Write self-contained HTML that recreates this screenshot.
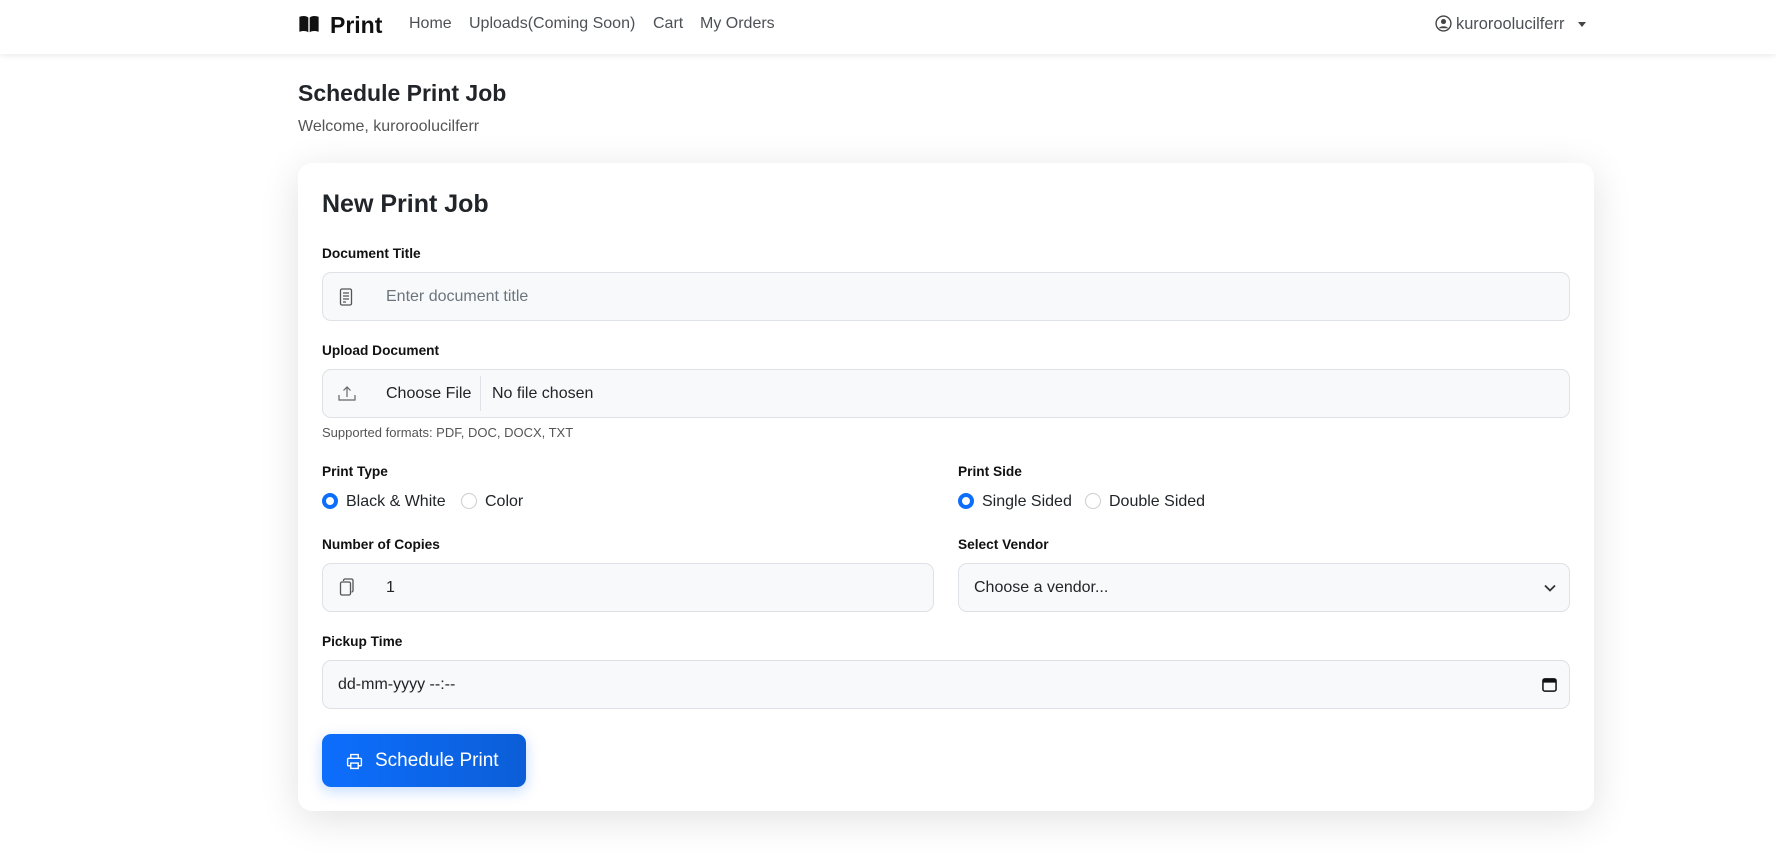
<!DOCTYPE html>
<html><head><meta charset="utf-8"><style>
*{box-sizing:border-box;margin:0;padding:0}
body{width:1776px;height:856px;overflow:hidden;background:#fff;font-family:"Liberation Sans",sans-serif;color:#212529;position:relative}
.nav{position:absolute;left:0;top:0;width:1776px;height:54px;background:#fff;box-shadow:0 2px 6px rgba(0,0,0,.08)}
.a{position:absolute}
.nl{font-size:16px;color:#4d5156;top:15px}
.card{position:absolute;left:298px;top:163px;width:1296px;height:648px;background:#fff;border-radius:14px;box-shadow:0 8px 40px rgba(0,0,0,.12)}
.lbl{position:absolute;font-size:13.7px;font-weight:bold;color:#111}
.inp{position:absolute;height:49px;background:#f8f9fa;border:1px solid #dee2e6;border-radius:9px;font-size:16px;color:#212529}
.inp span{position:absolute;top:15px}
.radio{position:absolute;width:16px;height:16px;border-radius:50%;border:1px solid #ccc;background:#fff}
.radio.on{border:4.5px solid #0d6efd}
.rt{position:absolute;font-size:16px;color:#212529}
</style></head><body>
<div class="nav">
  <svg class="a" style="left:297px;top:13px" width="24" height="22" viewBox="0 0 16 16"><path fill="#111" d="M1 2.8C2.9 2 5.9 1.7 7.5 3.4V14C5.9 12.7 3 12.9 1 13.6ZM8.5 3.4C10.1 1.7 13.1 2 15 2.8V13.6C13 12.9 10.1 12.7 8.5 14Z"/></svg>
  <div class="a" style="left:330px;top:12px;font-size:23px;font-weight:bold;color:#111">Print</div>
  <div class="a nl" style="left:409px">Home</div>
  <div class="a nl" style="left:469px">Uploads(Coming Soon)</div>
  <div class="a nl" style="left:653px">Cart</div>
  <div class="a nl" style="left:700px">My Orders</div>
  <svg class="a" style="left:1435px;top:15px" width="17" height="17" viewBox="0 0 16 16"><circle cx="8" cy="8" r="7" fill="none" stroke="#444" stroke-width="1.3"/><circle cx="8" cy="6.2" r="2.4" fill="#444"/><path d="M3.5 12.5C5 10 11 10 12.5 12.5" fill="#444"/></svg>
  <div class="a nl" style="left:1456px;font-size:16.4px">kuroroolucilferr</div>
  <div class="a" style="left:1578px;top:22px;border-left:4px solid transparent;border-right:4px solid transparent;border-top:5px solid #444"></div>
</div>
<div class="a" style="left:298px;top:80px;font-size:23px;font-weight:bold;color:#212529">Schedule Print Job</div>
<div class="a" style="left:298px;top:118px;font-size:16px;color:#555">Welcome, kuroroolucilferr</div>
<div class="card">
  <div class="a" style="left:24px;top:27px;font-size:25px;font-weight:bold;color:#212529">New Print Job</div>
  <div class="lbl" style="left:24px;top:83px">Document Title</div>
  <div class="inp" style="left:24px;top:109px;width:1248px">
    <svg class="a" style="left:16px;top:15px" width="14" height="18" viewBox="0 0 14 18"><rect x="1.5" y="1" width="11" height="16" rx="1.5" fill="none" stroke="#555" stroke-width="1.3"/><path d="M4 5h6M4 8h6M4 11h6M4 14h3" stroke="#555" stroke-width="1.2"/></svg>
    <span style="left:63px;color:#6c757d">Enter document title</span></div>
  <div class="lbl" style="left:24px;top:180px">Upload Document</div>
  <div class="inp" style="left:24px;top:206px;width:1248px">
    <svg class="a" style="left:15px;top:15px" width="18" height="17" viewBox="0 0 18 17"><path d="M1 10v5h16v-5M9 12V2M5.5 5.5 9 2l3.5 3.5" fill="none" stroke="#666" stroke-width="1.2"/></svg>
    <span style="left:63px">Choose File</span>
    <div class="a" style="left:157px;top:6px;width:1px;height:35px;background:#dee2e6"></div>
    <span style="left:169px">No file chosen</span></div>
  <div class="a" style="left:24px;top:262px;font-size:13px;color:#555">Supported formats: PDF, DOC, DOCX, TXT</div>
  <div class="lbl" style="left:24px;top:301px">Print Type</div>
  <div class="radio on" style="left:24px;top:330px"></div><div class="rt" style="left:48px;top:330px">Black &amp; White</div>
  <div class="radio" style="left:163px;top:330px"></div><div class="rt" style="left:187px;top:330px">Color</div>
  <div class="lbl" style="left:660px;top:301px">Print Side</div>
  <div class="radio on" style="left:660px;top:330px"></div><div class="rt" style="left:684px;top:330px">Single Sided</div>
  <div class="radio" style="left:787px;top:330px"></div><div class="rt" style="left:811px;top:330px">Double Sided</div>
  <div class="lbl" style="left:24px;top:374px">Number of Copies</div>
  <div class="inp" style="left:24px;top:400px;width:612px">
    <svg class="a" style="left:16px;top:14px" width="16" height="19" viewBox="0 0 16 19"><rect x="1.5" y="4" width="10" height="13" rx="1.5" fill="none" stroke="#555" stroke-width="1.3"/><path d="M4.5 3V2.5A1.5 1.5 0 0 1 6 1h6.5A1.5 1.5 0 0 1 14 2.5v10A1.5 1.5 0 0 1 12.5 14" fill="none" stroke="#555" stroke-width="1.3"/></svg>
    <span style="left:63px">1</span></div>
  <div class="lbl" style="left:660px;top:374px">Select Vendor</div>
  <div class="inp" style="left:660px;top:400px;width:612px">
    <span style="left:15px">Choose a vendor...</span>
    <svg class="a" style="left:585px;top:20px" width="12" height="8" viewBox="0 0 12 8"><path d="M1 1.5 6 6.5 11 1.5" fill="none" stroke="#333" stroke-width="1.8"/></svg></div>
  <div class="lbl" style="left:24px;top:471px">Pickup Time</div>
  <div class="inp" style="left:24px;top:497px;width:1248px">
    <span style="left:15px">dd-mm-yyyy --:--</span>
    <svg class="a" style="left:1219px;top:16px" width="15" height="15" viewBox="0 0 16 16"><rect x="1" y="2" width="14" height="13" rx="2" fill="none" stroke="#111" stroke-width="1.6"/><rect x="1" y="2" width="14" height="4" fill="#111"/></svg></div>
  <div class="a" style="left:24px;top:571px;width:204px;height:53px;border-radius:9px;background:linear-gradient(90deg,#0d6efd,#0b5ed7);box-shadow:0 4px 14px rgba(13,110,253,.25)">
    <svg class="a" style="left:24px;top:19px" width="17" height="17" viewBox="0 0 16 16"><path d="M4.5 5V1.5h7V5M4.5 12H2.5A1 1 0 0 1 1.5 11V6A1 1 0 0 1 2.5 5h11a1 1 0 0 1 1 1v5a1 1 0 0 1-1 1h-2M4.5 9.5h7v5h-7z" fill="none" stroke="#fff" stroke-width="1.3"/></svg>
    <div class="a" style="left:53px;top:16px;font-size:19px;color:#fff">Schedule Print</div>
  </div>
</div>
</body></html>
